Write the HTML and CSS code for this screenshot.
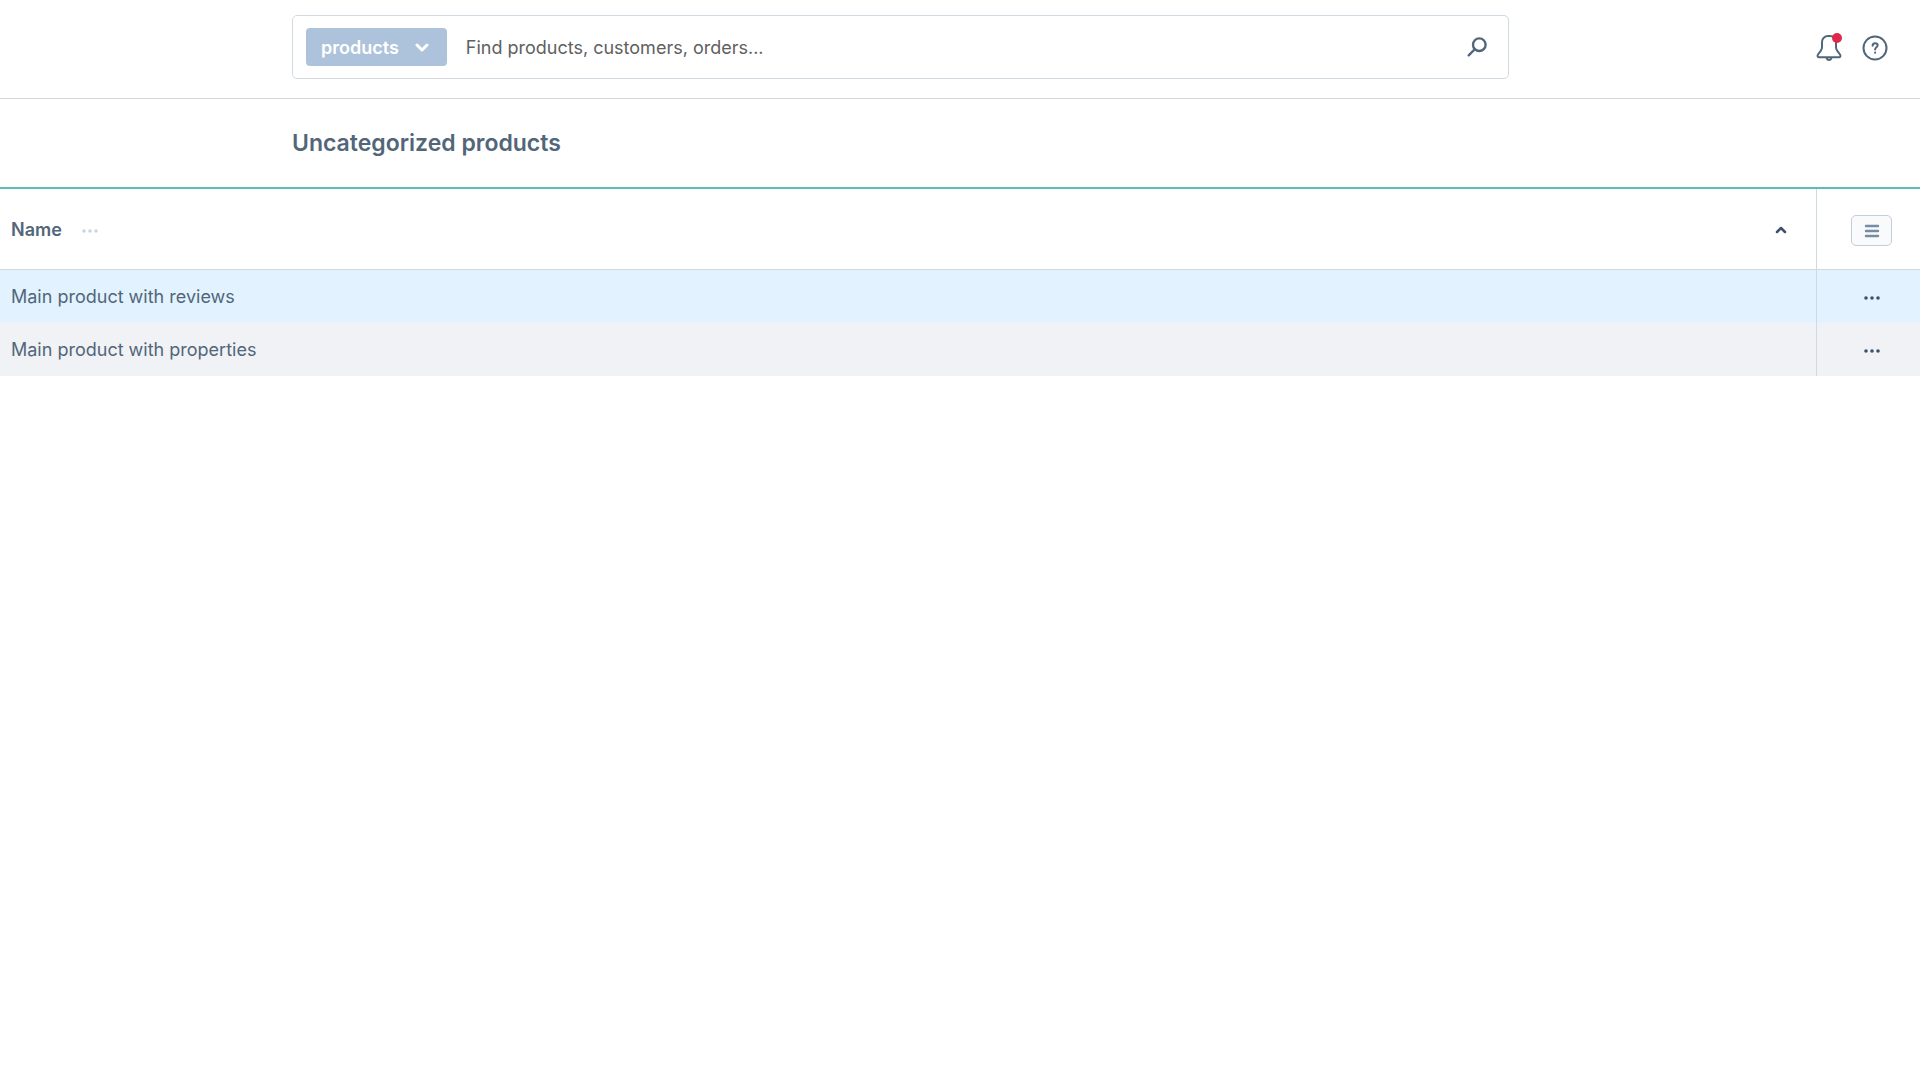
FILE: index.html
```html
<!DOCTYPE html>
<html lang="en">
<head>
<meta charset="utf-8">
<meta name="viewport" content="width=device-width, initial-scale=1">
<title>Uncategorized products</title>
<link rel="stylesheet" href="styles.css">
</head>
<body>
<header class="topbar">
  <form class="search" role="search">
    <button class="search-type" type="button">products
      <svg width="14" height="10" viewBox="0 0 14 10" fill="none" stroke="currentColor" stroke-width="3" stroke-linecap="round" stroke-linejoin="round" aria-hidden="true"><path d="M2 2l5 5 5-5"/></svg>
    </button>
    <input class="search-input" type="text" aria-label="Search" placeholder="Find products, customers, orders...">
    <button class="icon-button" type="submit" aria-label="Search">
      <svg width="20" height="20" viewBox="0 0 20 20" fill="none" stroke="currentColor" stroke-width="2.400" stroke-linecap="round" aria-hidden="true"><circle cx="12.300" cy="7.700" r="6.300"/><path d="M7.500 12.500L1.700 18.300"/></svg>
    </button>
  </form>
  <div class="actions">
    <button class="icon-button notifications" type="button" aria-label="Notifications">
      <svg width="26" height="26" viewBox="0 0 26 26" fill="none" stroke="currentColor" stroke-width="2" stroke-linejoin="round" aria-hidden="true"><path d="M12 1h2a6 6 0 0 1 6 6v5c0 1.500.4 2.700 1.300 3.900l2.700 3.600c.9 1.300.4 2.800-1.100 2.800H3.100c-1.500 0-2-1.500-1.100-2.800l2.700-3.600C5.600 14.700 6 13.500 6 12V7a6 6 0 0 1 6-6z"/><path d="M10.500 22.500c.4 1.500 1.300 2.500 2.500 2.500s2.100-1 2.500-2.500"/></svg>
      <span class="badge"></span>
    </button>
    <button class="icon-button" type="button" aria-label="Help">
      <svg width="26" height="26" viewBox="0 0 26 26" fill="none" stroke="currentColor" stroke-width="2" stroke-linecap="round" aria-hidden="true"><circle cx="13" cy="13" r="11.500"/><path d="M10.600 10.800c0-1.500 1-2.500 2.500-2.500s2.500 1 2.500 2.300c0 1.700-2.500 1.800-2.500 3.900"/><path d="M13.100 17.600v.1"/></svg>
    </button>
  </div>
</header>
<main>
  <div class="page-head">
    <h1 class="page-title">Uncategorized products</h1>
  </div>
  <table class="grid">
    <thead>
      <tr>
        <th scope="col">
          <div class="head-cell">
            <span>Name</span>
            <button class="icon-button column-menu" type="button" aria-label="Column options">
              <svg width="16" height="4" viewBox="0 0 16 4" fill="currentColor" aria-hidden="true"><circle cx="2" cy="2" r="1.700"/><circle cx="8" cy="2" r="1.700"/><circle cx="14" cy="2" r="1.700"/></svg>
            </button>
            <svg class="sort" width="12" height="8" viewBox="0 0 12 8" fill="none" stroke="currentColor" stroke-width="2.500" stroke-linecap="round" stroke-linejoin="round" aria-hidden="true"><path d="M2 6l4-4 4 4"/></svg>
          </div>
        </th>
        <th class="tools" scope="col">
          <button class="list-settings" type="button" aria-label="List settings">
            <svg width="16" height="14" viewBox="0 0 16 14" fill="none" stroke="currentColor" stroke-width="2.400" stroke-linecap="round" aria-hidden="true"><path d="M2 2h12M2 7h12M2 12h12"/></svg>
          </button>
        </th>
      </tr>
    </thead>
    <tbody>
      <tr class="is-hovered">
        <td>Main product with reviews</td>
        <td class="tools">
          <button class="icon-button row-menu" type="button" aria-label="Actions for Main product with reviews">
            <svg width="16" height="4" viewBox="0 0 16 4" fill="currentColor" aria-hidden="true"><circle cx="2" cy="2" r="1.800"/><circle cx="8" cy="2" r="1.800"/><circle cx="14" cy="2" r="1.800"/></svg>
          </button>
        </td>
      </tr>
      <tr class="is-striped">
        <td>Main product with properties</td>
        <td class="tools">
          <button class="icon-button row-menu" type="button" aria-label="Actions for Main product with properties">
            <svg width="16" height="4" viewBox="0 0 16 4" fill="currentColor" aria-hidden="true"><circle cx="2" cy="2" r="1.800"/><circle cx="8" cy="2" r="1.800"/><circle cx="14" cy="2" r="1.800"/></svg>
          </button>
        </td>
      </tr>
    </tbody>
  </table>
</main>
</body>
</html>
```
FILE: styles.css
```css
* {
  box-sizing: border-box;
}

body {
  margin: 0;
  background: #fff;
  color: #52667a;
  font: 18px/24px Inter, "Liberation Sans", sans-serif;
}

button,
input {
  font: inherit;
}

.topbar,
.page-head {
  display: grid;
  grid-template-columns: 292fr 1217fr 411fr;
  align-items: center;
}

.topbar {
  padding: 15px 0 19px;
  border-bottom: 1px solid #d1d9e0;
}

.search {
  grid-column: 2;
  display: flex;
  align-items: center;
  height: 64px;
  padding: 0 21px 0 13px;
  border: 1px solid #d1d9e0;
  border-radius: 5px;
}

.search-type {
  display: flex;
  align-items: center;
  gap: 16px;
  height: 38px;
  padding: 2px 18px 0 15px;
  border: 0;
  border-radius: 4px;
  background: #adc3db;
  color: #fff;
  font-weight: 600;
}

.search-input {
  flex: 1;
  min-width: 0;
  padding: 2px 19px 0;
  border: 0;
  outline: 0;
  background: none;
  color: #52667a;
}

.search-input::placeholder {
  color: #606060;
  opacity: 1;
}

.icon-button {
  display: inline-flex;
  align-items: center;
  padding: 0;
  border: 0;
  background: none;
  color: #52667a;
}

.actions {
  display: flex;
  justify-content: flex-end;
  gap: 20px;
  padding: 2px 32px 0 0;
}

.notifications {
  position: relative;
}

.badge {
  position: absolute;
  top: -2px;
  right: 0;
  width: 10px;
  height: 10px;
  border-radius: 50%;
  background: #de294c;
}

.page-head {
  height: 90px;
  border-bottom: 2px solid #5bbcb8;
}

.page-title {
  grid-column: 2;
  margin: 0;
  font-size: 23px;
  line-height: 32px;
  font-weight: 600;
}

.grid {
  width: 100%;
  border-collapse: separate;
  border-spacing: 0;
}

.grid th,
.grid td {
  padding: 0 11px;
  text-align: left;
}

.grid th {
  height: 81px;
  padding-top: 2px;
  border-bottom: 1px solid #d1d9e0;
  font-weight: 600;
}

.grid td {
  height: 53px;
}

.head-cell {
  display: flex;
  align-items: center;
}

.column-menu {
  margin-left: 20px;
  padding-top: 2px;
  color: #c8d3df;
}

.sort {
  margin: 0 18px 0 auto;
  color: #3d5269;
}

.grid .tools {
  width: 104px;
  padding-left: 6px;
  padding-right: 0;
  border-left: 1px solid #d1d9e0;
  text-align: center;
  line-height: 0;
}

.list-settings {
  display: inline-flex;
  align-items: center;
  justify-content: center;
  width: 41px;
  height: 31px;
  padding: 2px 0 0;
  border: 1px solid #c2cedb;
  border-radius: 5px;
  background: #f9fafb;
  color: #758ca3;
}

.row-menu {
  color: #3d5269;
}

.is-hovered {
  background: #e2f3ff;
}

.is-striped {
  background: #f0f2f5;
}
```
